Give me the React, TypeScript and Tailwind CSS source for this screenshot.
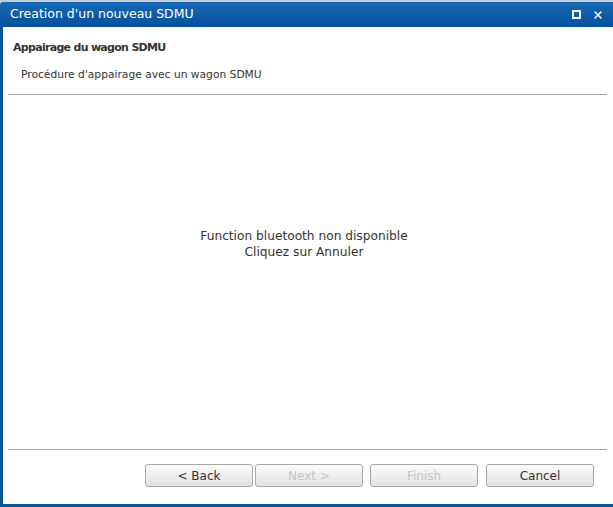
import { X } from "lucide-react";

const font = "font-['DejaVu_Sans',Verdana,sans-serif]";

function WizardButton({
  label,
  disabled,
  className = "",
}: {
  label: string;
  disabled?: boolean;
  className?: string;
}) {
  return (
    <button
      type="button"
      disabled={disabled}
      className={`h-[23px] w-[108px] rounded-[3px] border border-[#a9a9a9] bg-gradient-to-b from-[#fbfbfb] to-[#e2e2e2] text-[12px] ${
        disabled ? "text-[#c4c4c4]" : "text-[#333]"
      } ${className}`}
    >
      {label}
    </button>
  );
}

export default function App() {
  return (
    <div className={`h-[507px] w-[613px] overflow-hidden bg-[#c9ccd0] pt-[2px] ${font}`}>
      <div className="flex h-[505px] w-[620px] flex-col rounded-tl-[4px] border-b-[3px] border-l-[3px] border-[#0a5596] bg-white">
        {/* title bar */}
        <div className="-ml-[3px] flex h-[25px] shrink-0 items-center rounded-tl-[4px] bg-gradient-to-b from-[#1768b4] to-[#0550a0] pl-[10px] pr-[16px]">
          <span className="flex-1 text-[12.5px] text-white">
            Creation d'un nouveau SDMU
          </span>
          <span className="mr-[11px] h-[9px] w-[9px] border-2 border-white" />
          <X size={12} strokeWidth={3} className="text-white" />
        </div>

        {/* header */}
        <div className="px-[10px] pt-[13px] text-[#333]">
          <div className="text-[11px] font-bold tracking-[-0.7px]">
            Appairage du wagon SDMU
          </div>
          <div className="mt-[10px] pl-[8px] text-[10.7px]">
            Procédure d'appairage avec un wagon SDMU
          </div>
        </div>
        <div className="ml-[5px] mr-[13px] mt-[11px] h-px bg-[#a4a4a4]" />

        {/* content */}
        <div className="flex flex-1 flex-col items-center justify-center pb-[56px] pr-[15px] text-[12.2px] leading-[16px] text-[#333]">
          <div>Function bluetooth non disponible</div>
          <div>Cliquez sur Annuler</div>
        </div>

        <div className="ml-[5px] mr-[13px] h-px bg-[#a4a4a4]" />
        {/* buttons */}
        <div className="flex h-[54px] items-start pl-[142px] pt-[14px]">
          <WizardButton label="< Back" />
          <WizardButton label="Next >" disabled className="ml-[2px]" />
          <WizardButton label="Finish" disabled className="ml-[7px]" />
          <WizardButton label="Cancel" className="ml-[8px]" />
        </div>
      </div>
    </div>
  );
}
